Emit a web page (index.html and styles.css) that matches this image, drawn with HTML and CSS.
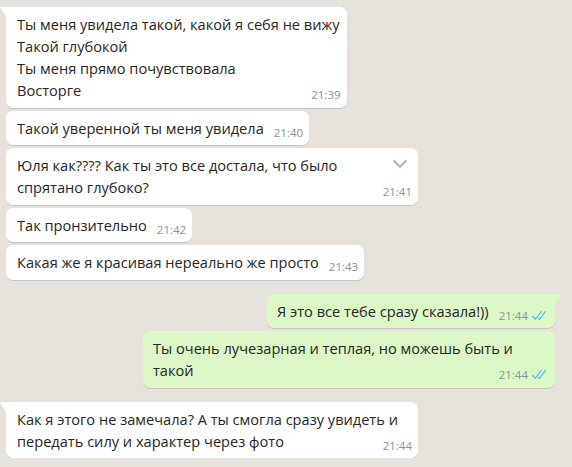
FILE: index.html
```html
<!DOCTYPE html>
<html lang="ru">
<head>
    <meta charset="UTF-8">
    <meta name="viewport" content="width=device-width, initial-scale=1.0">
    <title>Чат</title>
    <link rel="stylesheet" href="styles.css">
</head>
<body>
    <div class="chat">
        <div class="group in">
            <div class="msg">
                Ты меня увидела такой, какой я себя не вижу<br>
                Такой глубокой<br>
                Ты меня прямо почувствовала<br>
                Восторге<span class="time">21:39</span>
            </div>
            <div class="msg">
                Такой уверенной ты меня увидела<span class="time">21:40</span>
            </div>
            <div class="msg full">
                Юля как???? Как ты это все достала, что было<br>
                спрятано глубоко?<span class="time">21:41</span>
                <svg class="menu" viewBox="0 0 18 18"><path d="M3.3 4.6L9 10.3l5.7-5.7 1.6 1.6L9 13.4 1.7 6.2l1.6-1.6z"/></svg>
            </div>
            <div class="msg">
                Так пронзительно<span class="time">21:42</span>
            </div>
            <div class="msg">
                Какая же я красивая нереально же просто<span class="time">21:43</span>
            </div>
        </div>

        <div class="group out">
            <div class="msg">
                Я это все тебе сразу сказала!))<span class="time">21:44<svg class="ticks" viewBox="0 0 16 15"><path d="M15.01 3.316l-.478-.372a.365.365 0 0 0-.51.063L8.666 9.879a.32.32 0 0 1-.484.033l-.358-.325a.319.319 0 0 0-.484.032l-.378.483a.418.418 0 0 0 .036.541l1.32 1.266c.143.14.361.125.484-.033l6.272-8.048a.366.366 0 0 0-.064-.512zm-4.1 0l-.478-.372a.365.365 0 0 0-.51.063L4.566 9.879a.32.32 0 0 1-.484.033L1.891 7.769a.366.366 0 0 0-.515.006l-.423.433a.364.364 0 0 0 .006.514l3.258 3.185c.143.14.361.125.484-.033l6.272-8.048a.365.365 0 0 0-.063-.51z"/></svg></span>
            </div>
            <div class="msg full">
                Ты очень лучезарная и теплая, но можешь быть и<br>
                такой<span class="time">21:44<svg class="ticks" viewBox="0 0 16 15"><path d="M15.01 3.316l-.478-.372a.365.365 0 0 0-.51.063L8.666 9.879a.32.32 0 0 1-.484.033l-.358-.325a.319.319 0 0 0-.484.032l-.378.483a.418.418 0 0 0 .036.541l1.32 1.266c.143.14.361.125.484-.033l6.272-8.048a.366.366 0 0 0-.064-.512zm-4.1 0l-.478-.372a.365.365 0 0 0-.51.063L4.566 9.879a.32.32 0 0 1-.484.033L1.891 7.769a.366.366 0 0 0-.515.006l-.423.433a.364.364 0 0 0 .006.514l3.258 3.185c.143.14.361.125.484-.033l6.272-8.048a.365.365 0 0 0-.063-.51z"/></svg></span>
            </div>
        </div>

        <div class="group in">
            <div class="msg full">
                Как я этого не замечала? А ты смогла сразу увидеть и<br>
                передать силу и характер через фото<span class="time">21:44</span>
            </div>
        </div>
    </div>
</body>
</html>
```

FILE: styles.css
```css
body {
    margin: 0;
    background: #e7e1db;
    font-family: "Open Sans", "Noto Sans", sans-serif;
    color: #262626;
}
.chat {
    display: flex;
    flex-direction: column;
    gap: 14px;
    padding: 7px 17px 0 6px;
}
.group {
    display: flex;
    flex-direction: column;
    align-items: flex-start;
    gap: 3px;
}
.group.out {
    align-items: flex-end;
}
.msg {
    position: relative;
    box-sizing: border-box;
    max-width: 412px;
    padding: 6px 7px 6.5px 11px;
    font-size: 14.6px;
    line-height: 22px;
    background: #ffffff;
    border-radius: 7px;
    box-shadow: 0 1px 0.5px rgba(0, 0, 0, 0.13);
}
.msg.full {
    width: 412px;
}
.out .msg {
    background: #dcf8c6;
    padding: 6px 9px 6.5px 10px;
}
/* хвостик у первого сообщения в группе */
.in .msg:first-child {
    border-top-left-radius: 0;
}
.in .msg:first-child::before {
    content: "";
    position: absolute;
    top: 0;
    left: -6px;
    border-top: 10px solid #ffffff;
    border-left: 6px solid transparent;
}
.out .msg:first-child {
    border-top-right-radius: 0;
}
.out .msg:first-child::before {
    content: "";
    position: absolute;
    top: 0;
    right: -7px;
    border-top: 10px solid #dcf8c6;
    border-right: 7px solid transparent;
}
.time {
    float: right;
    margin: 8px -1px -7px 10px;
    font-size: 11.5px;
    line-height: 15px;
    color: #8c9296;
}
.ticks {
    display: inline-block;
    vertical-align: top;
    width: 16px;
    height: 15px;
    margin-left: 3px;
    fill: #4fc3f7;
}
.menu {
    position: absolute;
    top: 7px;
    right: 9px;
    width: 18px;
    height: 18px;
    fill: #b8b8b8;
}
```
